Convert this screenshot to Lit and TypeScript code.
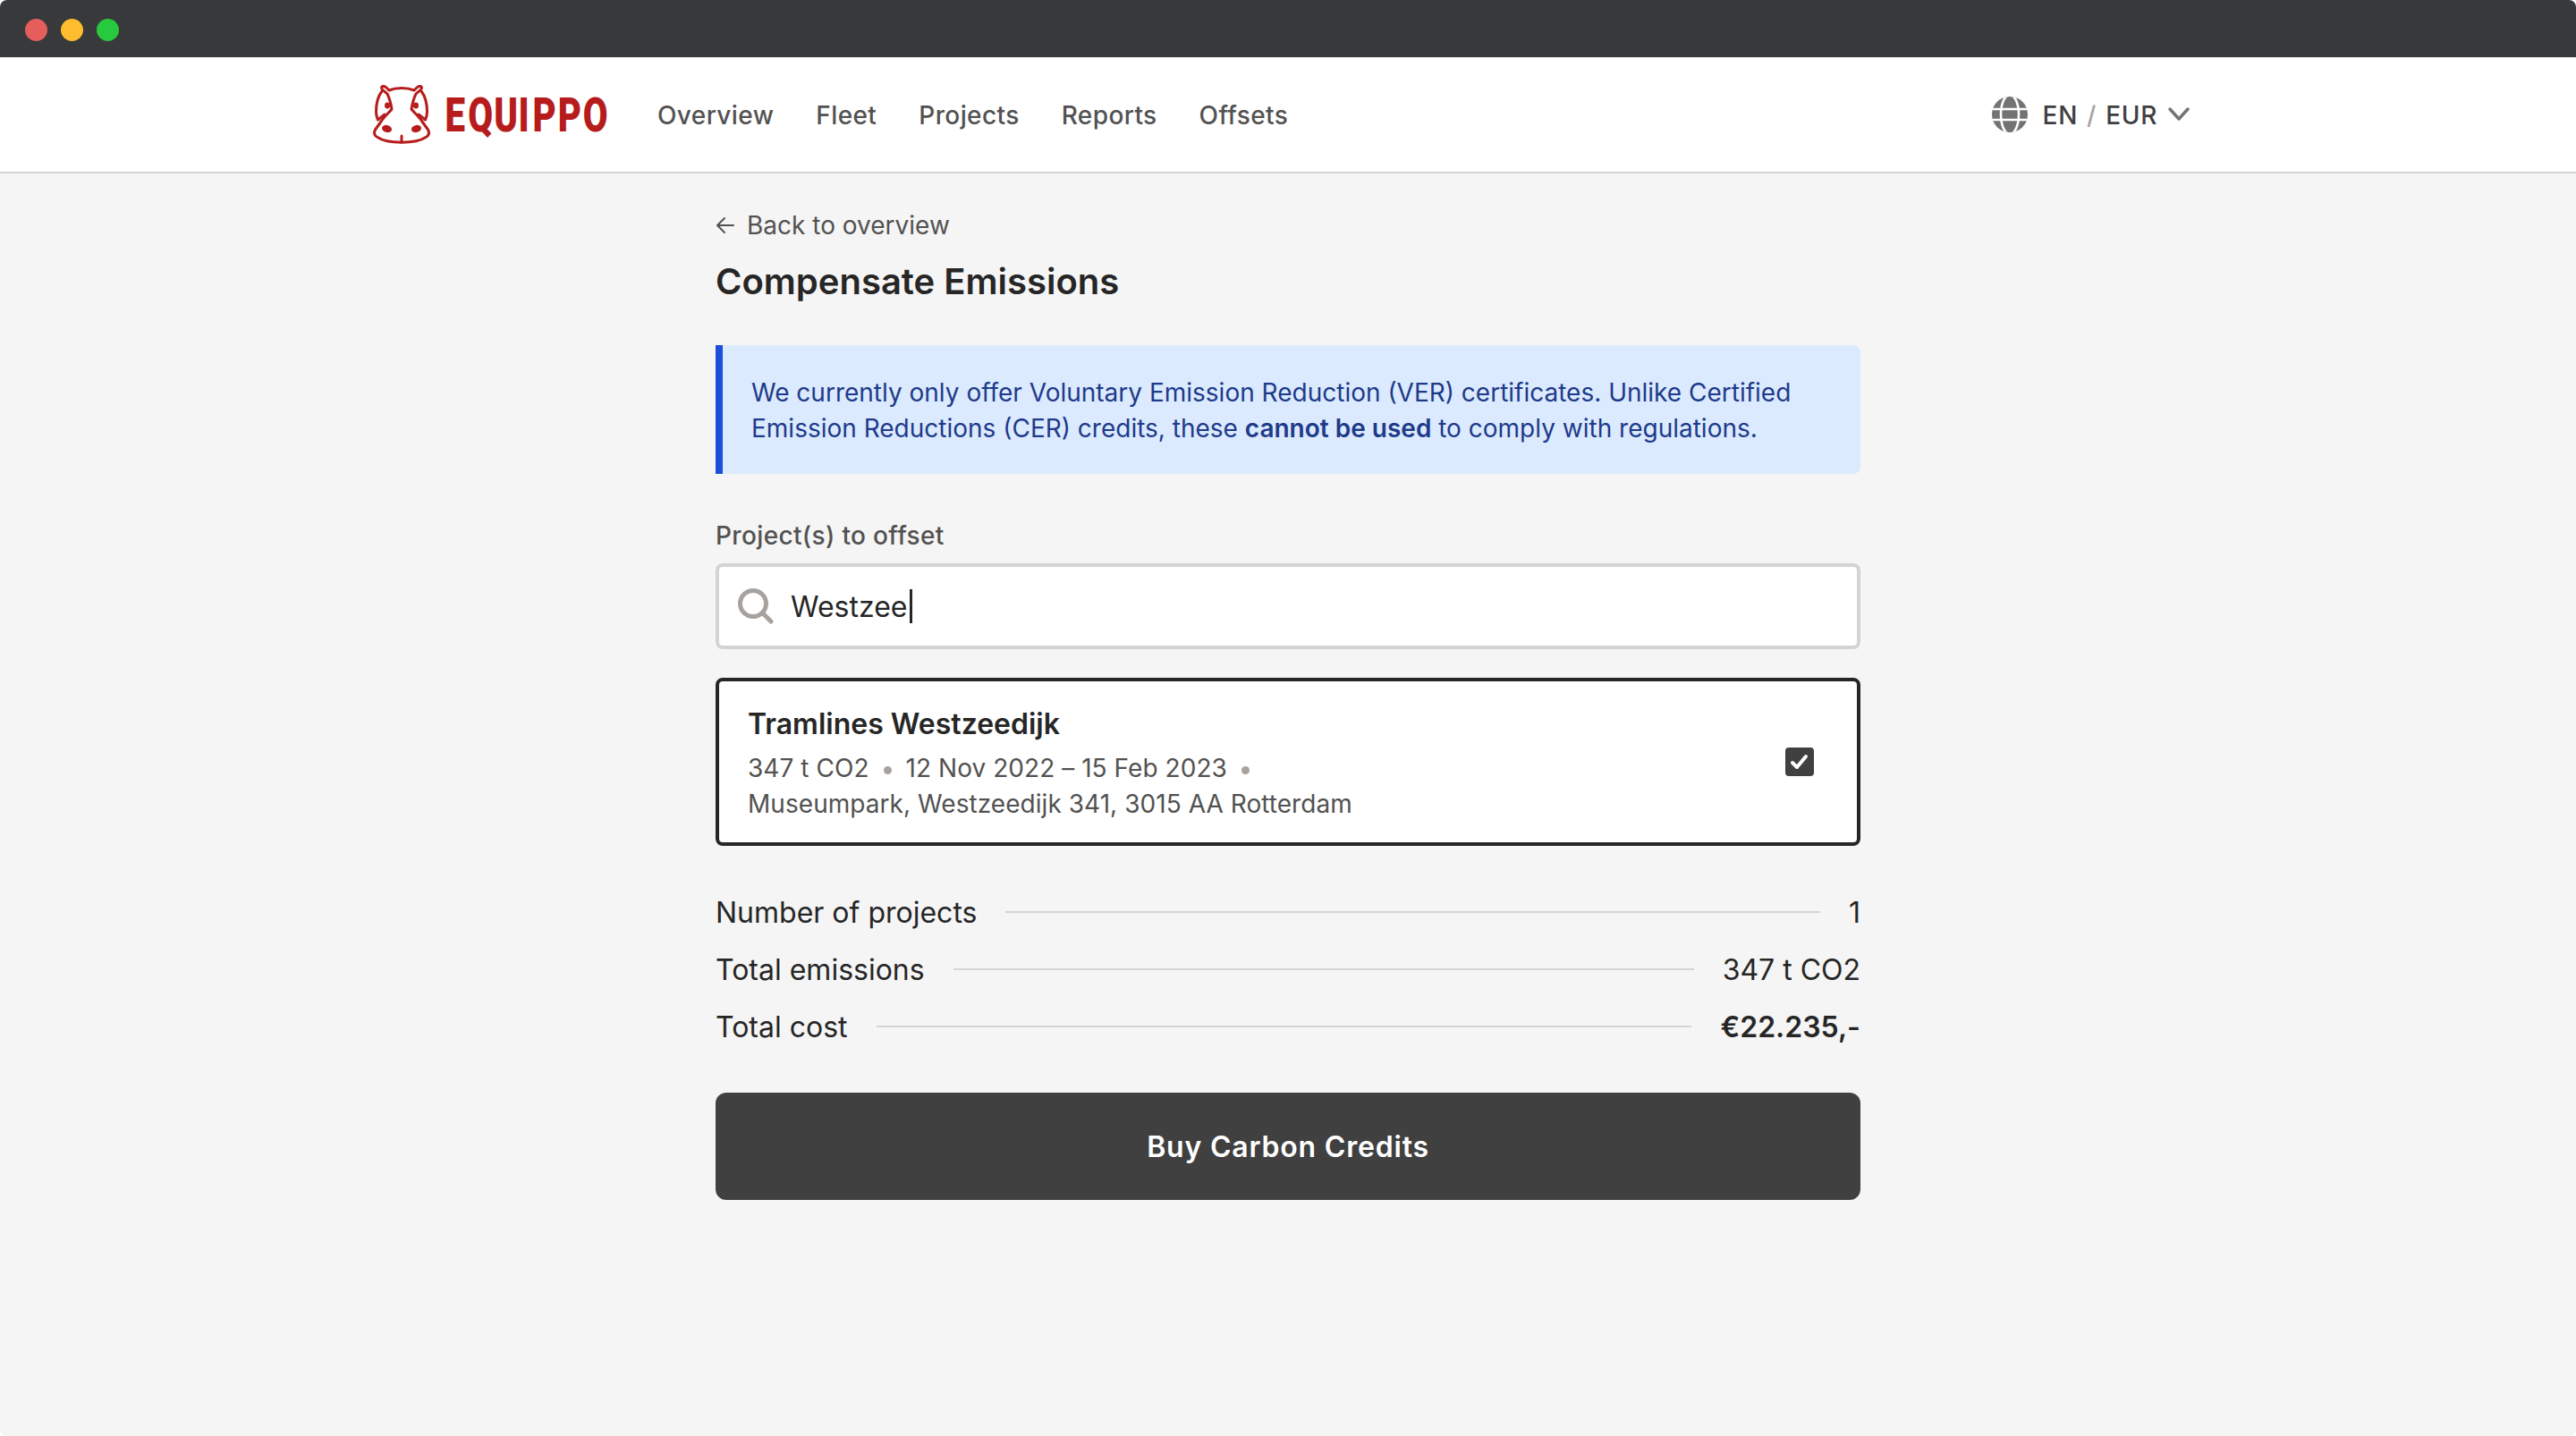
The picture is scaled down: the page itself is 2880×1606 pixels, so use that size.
import { LitElement, html, css } from 'lit';
import { customElement } from 'lit/decorators.js';

const navItems = ['Overview', 'Fleet', 'Projects', 'Reports', 'Offsets'];

const hippo = html`
  <svg class="hippo" width="66" height="66" viewBox="0 0 64 66" fill="none" stroke="#b71c1c" stroke-width="3" stroke-linejoin="round" stroke-linecap="round">
    <path d="M21 27 C20 21 18 14 16 10 C13 7 9 5 9.5 2.8 C10 .8 13 1.2 15 3 L18 6 C26 2.8 38 2.8 46 6 L49 3 C51 1.2 54 .8 54.5 2.8 C55 5 51 7 48 10 C46 14 44 21 43 27 C46 31 52 36 55 41 L61.5 50 C63.5 54 62 57 59 58.5 C48 66 16 66 5 58.5 C2 57 .5 54 2.5 50 L9 41 C12 36 18 31 21 27 Z" />
    <path d="M10 7 C6 12 3.5 21 3.5 30 C3.5 33 4 36 5.5 39 L13 33" />
    <path d="M54 7 C58 12 60.5 21 60.5 30 C60.5 33 60 36 58.5 39 L51 33" />
    <path d="M32 57 V64" />
    <g fill="#b71c1c" stroke="none">
      <ellipse cx="16" cy="23" rx="3" ry="3.6" />
      <ellipse cx="48" cy="23" rx="3" ry="3.6" />
      <ellipse cx="15.5" cy="49" rx="5.6" ry="4" transform="rotate(15 15.5 49)" />
      <ellipse cx="48.5" cy="49" rx="5.6" ry="4" transform="rotate(-15 48.5 49)" />
    </g>
  </svg>
`;

@customElement('app-root')
export class AppRoot extends LitElement {
  static styles = css`
    :host {
      display: block;
      min-height: 100vh;
      background: #f5f5f5;
      font-family: 'Inter', 'Liberation Sans', sans-serif;
      font-size: 28px;
      line-height: 40px;
      color: #262626;
      border-radius: 8px;
      overflow: hidden;
    }

    .titlebar {
      box-sizing: border-box;
      height: 64px;
      background: #38393b;
      display: flex;
      align-items: center;
      gap: 15px;
      padding: 3px 0 0 28px;
    }

    .light {
      width: 25px;
      height: 25px;
      border-radius: 50%;
    }

    .header {
      height: 128px;
      background: #fff;
      border-bottom: 2px solid #d4d4d4;
    }

    .header-inner {
      box-sizing: border-box;
      height: 100%;
      padding: 0 432px 0 416px;
      display: flex;
      align-items: center;
    }

    .logo {
      display: flex;
      align-items: center;
      gap: 17px;
      margin-right: 49px;
    }

    .hippo {
      display: block;
    }

    .wordmark {
      display: block;
      overflow: visible;
    }

    .wordmark text {
      font-family: 'Roboto', sans-serif;
      font-weight: 900;
      font-size: 53px;
      fill: #b71c1c;
    }

    nav {
      display: flex;
      gap: 47px;
      flex: 1;
      font-weight: 500;
      color: #525252;
      letter-spacing: 0.4px;
      margin-top: 2px;
    }

    .locale {
      display: flex;
      align-items: center;
      font-weight: 500;
      color: #404040;
      letter-spacing: 0.7px;
      margin-top: 2px;
    }

    .locale .slash {
      color: #a8a29e;
      margin: 0 10px;
    }

    .globe {
      margin-right: 16px;
      margin-top: -2px;
    }

    .chevron {
      margin-left: 12px;
      margin-top: -2px;
    }

    main {
      width: 1280px;
      margin: 0 auto;
      padding-top: 38px;
    }

    .back {
      display: flex;
      align-items: center;
      gap: 13px;
      color: #525252;
    }

    h1 {
      margin: 19px 0 0;
      font-size: 40px;
      line-height: 48px;
      font-weight: 600;
      color: #262626;
    }

    .notice {
      margin-top: 47px;
      height: 144px;
      box-sizing: border-box;
      border-left: 8px solid #1d4ed8;
      border-radius: 0 8px 8px 0;
      background: #dbeafe;
      color: #1e3a8a;
      padding: 33px 32px 0;
    }

    .notice b {
      font-weight: 600;
    }

    label {
      display: block;
      margin-top: 49px;
      font-weight: 500;
      color: #525252;
      letter-spacing: 0.35px;
    }

    .search {
      margin-top: 11px;
      height: 96px;
      box-sizing: border-box;
      border: 4px solid #d4d4d4;
      border-radius: 8px;
      background: #fff;
      display: flex;
      align-items: center;
      padding-left: 21px;
      font-size: 32px;
    }

    .search svg {
      margin-right: 19px;
    }

    .search .typed {
      padding-top: 1px;
    }

    .caret {
      width: 3px;
      height: 38px;
      margin-left: 3px;
      background: #262626;
    }

    .card {
      margin-top: 32px;
      height: 188px;
      box-sizing: border-box;
      border: 4px solid #262626;
      border-radius: 8px;
      background: #fff;
      padding: 0 48px 0 32px;
      display: flex;
      align-items: center;
      justify-content: space-between;
    }

    .card h2 {
      margin: 0 0 5px;
      font-size: 32px;
      line-height: 48px;
      font-weight: 600;
    }

    .meta {
      color: #525252;
      letter-spacing: 0.05px;
    }

    .dot {
      display: inline-block;
      width: 9px;
      height: 9px;
      margin: 0 16px;
      border-radius: 50%;
      background: #a8a29e;
      vertical-align: 3px;
    }

    .check {
      width: 32px;
      height: 32px;
      border-radius: 4px;
      background: #404040;
      display: flex;
      align-items: center;
      justify-content: center;
    }

    .totals {
      margin-top: 43px;
      font-size: 32px;
    }

    .row {
      height: 64px;
      display: flex;
      align-items: center;
      gap: 32px;
    }

    .row i {
      flex: 1;
      height: 2px;
      background: #d4d4d4;
      margin-top: -2px;
    }

    .row .total-value {
      min-width: 154px;
      text-align: right;
    }

    .row strong {
      font-weight: 600;
    }

    button {
      display: block;
      width: 100%;
      height: 120px;
      margin-top: 41px;
      border: none;
      border-radius: 12px;
      background: #404040;
      color: #fff;
      font: 600 32px 'Inter', 'Liberation Sans', sans-serif;
      letter-spacing: 0.8px;
    }
  `;

  render() {
    return html`
      <div class="titlebar">
        <div class="light" style="background:#e55e5c"></div>
        <div class="light" style="background:#febc2e"></div>
        <div class="light" style="background:#27c93f"></div>
      </div>

      <header class="header">
        <div class="header-inner">
          <div class="logo">
            ${hippo}
            <svg class="wordmark" width="187" height="60" viewBox="0 0 187 60">
              <text transform="scale(0.76 1)" x="-2 32 70 106 127 164 201" y="49">EQUIPPO</text>
            </svg>
          </div>
          <nav>${navItems.map(item => html`<span>${item}</span>`)}</nav>
          <div class="locale">
            <svg class="globe" width="42" height="42" viewBox="0 0 42 42" fill="#737373">
              <defs>
                <clipPath id="globe-clip"><circle cx="21" cy="21" r="20"></circle></clipPath>
              </defs>
              <circle cx="21" cy="21" r="20"></circle>
              <g clip-path="url(#globe-clip)" fill="none" stroke="#fff" stroke-width="2.6">
                <ellipse cx="21" cy="21" rx="10" ry="22"></ellipse>
                <path d="M0 15 H42 M0 27 H42"></path>
              </g>
            </svg>
            <span>EN</span><span class="slash">/</span><span>EUR</span>
            <svg class="chevron" width="24" height="16" viewBox="0 0 24 16" fill="none" stroke="#737373" stroke-width="3.4" stroke-linecap="round" stroke-linejoin="round">
              <path d="M2 2 L12 13 L22 2"></path>
            </svg>
          </div>
        </div>
      </header>

      <main>
        <div class="back">
          <svg width="22" height="20" viewBox="0 0 22 20" fill="none" stroke="#525252" stroke-width="2" stroke-linecap="round" stroke-linejoin="round">
            <path d="M20 10 H2 M10 2 L2 10 L10 18"></path>
          </svg>
          <span>Back to overview</span>
        </div>
        <h1>Compensate Emissions</h1>

        <div class="notice">
          We currently only offer Voluntary Emission Reduction (VER) certificates. Unlike Certified
          Emission Reductions (CER) credits, these <b>cannot be used</b> to comply with regulations.
        </div>

        <label>Project(s) to offset</label>
        <div class="search">
          <svg width="40" height="40" viewBox="0 0 40 40" fill="none" stroke="#a8a29e" stroke-width="5" stroke-linecap="round">
            <circle cx="17" cy="17" r="14.5"></circle>
            <path d="M28 28 L37 37"></path>
          </svg>
          <span class="typed">Westzee</span><span class="caret"></span>
        </div>

        <div class="card">
          <div>
            <h2>Tramlines Westzeedijk</h2>
            <div class="meta">347 t CO2<span class="dot"></span>12 Nov 2022 – 15 Feb 2023<span class="dot"></span></div>
            <div class="meta">Museumpark, Westzeedijk 341, 3015 AA Rotterdam</div>
          </div>
          <div class="check">
            <svg width="22" height="20" viewBox="0 0 22 20" fill="none" stroke="#fff" stroke-width="4" stroke-linecap="round" stroke-linejoin="round">
              <path d="M3 11 L8 16 L18 4"></path>
            </svg>
          </div>
        </div>

        <div class="totals">
          <div class="row"><span>Number of projects</span><i></i><span>1</span></div>
          <div class="row"><span>Total emissions</span><i></i><span class="total-value">347 t CO2</span></div>
          <div class="row"><span>Total cost</span><i></i><span class="total-value"><strong>€22.235,-</strong></span></div>
        </div>

        <button>Buy Carbon Credits</button>
      </main>
    `;
  }
}

declare global {
  interface HTMLElementTagNameMap {
    'app-root': AppRoot;
  }
}
